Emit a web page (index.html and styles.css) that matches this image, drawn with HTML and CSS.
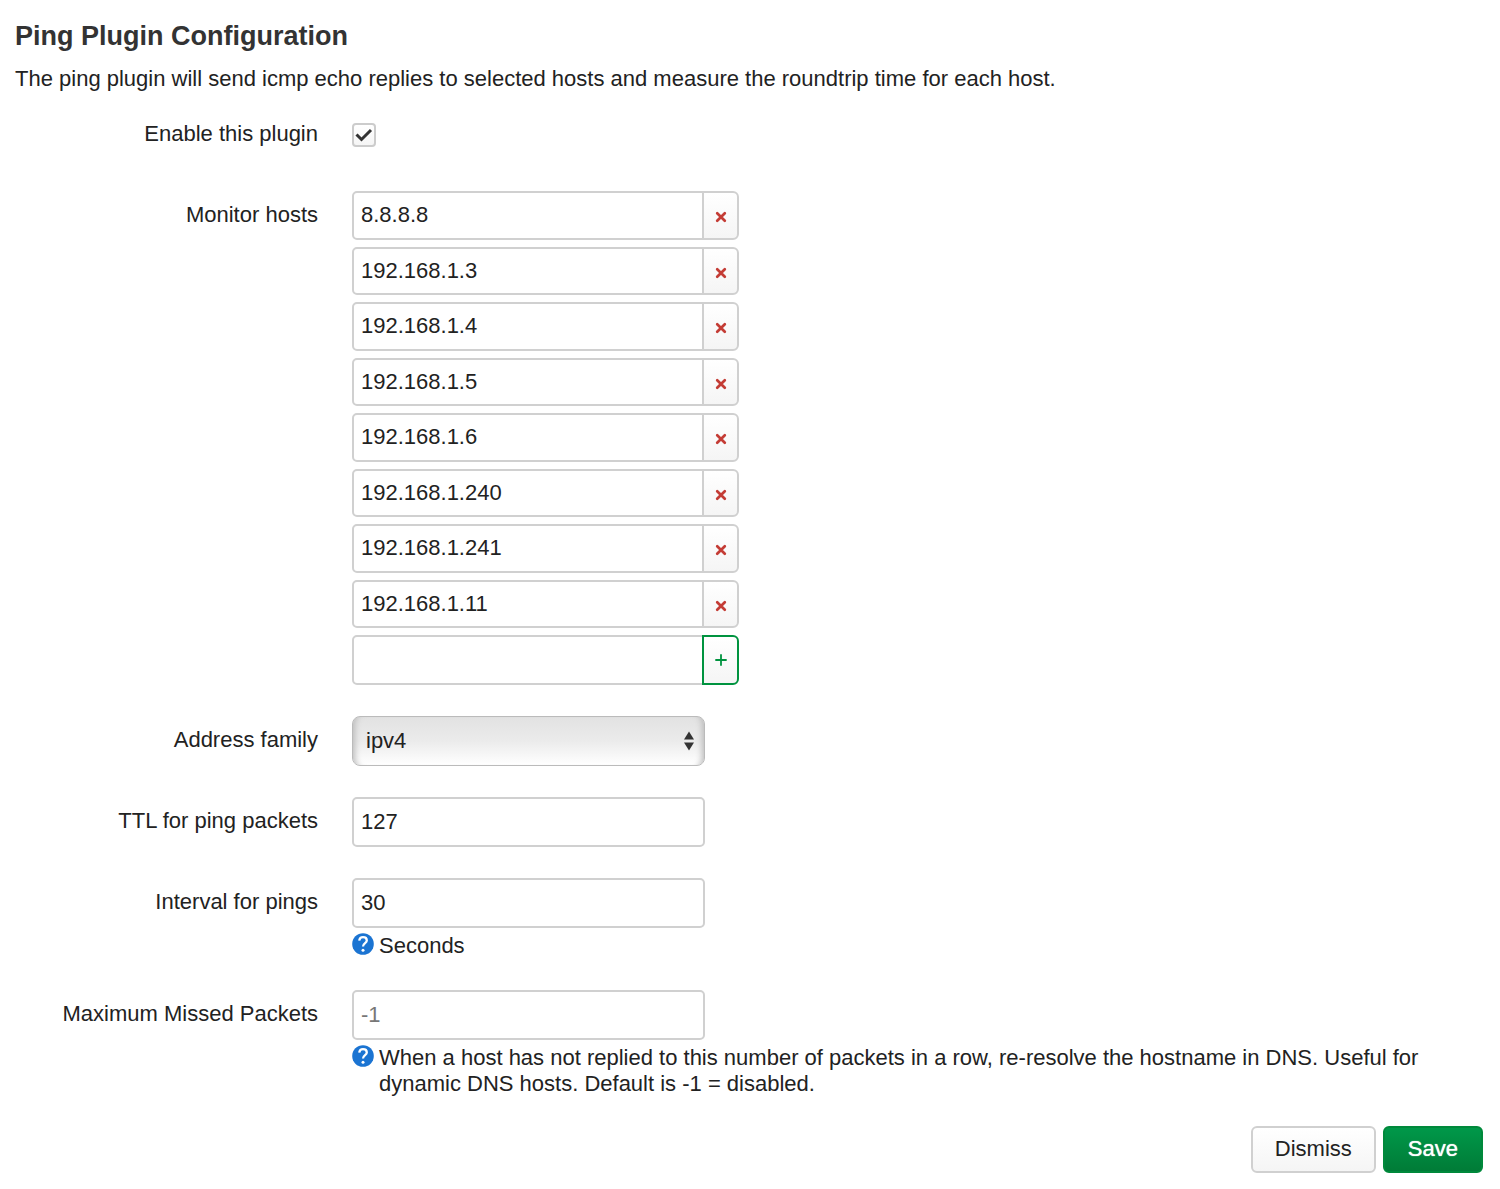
FILE: index.html
```html
<!DOCTYPE html>
<html lang="en">
<head>
<meta charset="utf-8">
<title>Ping Plugin Configuration</title>
<link rel="stylesheet" href="styles.css">
</head>
<body>
<svg class="symbols" aria-hidden="true">
  <symbol id="cross" viewBox="0 0 12 12"><path d="M2.2 2.2L9.8 9.8M9.8 2.2L2.2 9.8" stroke="currentColor" stroke-width="2.7" stroke-linecap="round"/></symbol>
  <symbol id="help" viewBox="0 0 22 22"><circle cx="11" cy="11" r="10.8" fill="#1b74d2"/><path d="M7.2 7.6C7.6 5.2 9.2 4.2 11 4.2C13.2 4.2 14.8 5.5 14.8 7.5C14.8 10 11 10.2 11 13.4" fill="none" stroke="#fff" stroke-width="2.3"/><circle cx="11" cy="17.2" r="1.5" fill="#fff"/></symbol>
</svg>
<form class="config">
  <h1 class="title">Ping Plugin Configuration</h1>
  <p class="intro">The ping plugin will send icmp echo replies to selected hosts and measure the roundtrip time for each host.</p>

  <div class="row row-check">
    <label class="name" for="enable">Enable this plugin</label>
    <div class="field"><input class="check" type="checkbox" id="enable" checked></div>
  </div>

  <div class="row">
    <label class="name" for="host1">Monitor hosts</label>
    <div class="field hosts">
      <div class="host-list">
        <div class="host"><input class="text" id="host1" value="8.8.8.8"><button class="side remove" type="button" aria-label="Remove"><svg class="cross"><use href="#cross"/></svg></button></div>
        <div class="host"><input class="text" aria-label="Host 2" value="192.168.1.3"><button class="side remove" type="button" aria-label="Remove"><svg class="cross"><use href="#cross"/></svg></button></div>
        <div class="host"><input class="text" aria-label="Host 3" value="192.168.1.4"><button class="side remove" type="button" aria-label="Remove"><svg class="cross"><use href="#cross"/></svg></button></div>
        <div class="host"><input class="text" aria-label="Host 4" value="192.168.1.5"><button class="side remove" type="button" aria-label="Remove"><svg class="cross"><use href="#cross"/></svg></button></div>
        <div class="host"><input class="text" aria-label="Host 5" value="192.168.1.6"><button class="side remove" type="button" aria-label="Remove"><svg class="cross"><use href="#cross"/></svg></button></div>
        <div class="host"><input class="text" aria-label="Host 6" value="192.168.1.240"><button class="side remove" type="button" aria-label="Remove"><svg class="cross"><use href="#cross"/></svg></button></div>
        <div class="host"><input class="text" aria-label="Host 7" value="192.168.1.241"><button class="side remove" type="button" aria-label="Remove"><svg class="cross"><use href="#cross"/></svg></button></div>
        <div class="host"><input class="text" aria-label="Host 8" value="192.168.1.11"><button class="side remove" type="button" aria-label="Remove"><svg class="cross"><use href="#cross"/></svg></button></div>
      </div>
      <div class="host"><input class="text" aria-label="New host"><button class="side add" type="button" aria-label="Add"><svg class="plus" viewBox="0 0 12 12"><path d="M6 0.3V11.7M0.3 6H11.7" stroke="currentColor" stroke-width="1.8"/></svg></button></div>
    </div>
  </div>

  <div class="row">
    <label class="name" for="family">Address family</label>
    <div class="field">
      <div class="select-box">
        <select class="select" id="family"><option>ipv4</option><option>ipv6</option></select>
        <svg class="arrows" viewBox="0 0 10 20"><path d="M5 0.5L10 8.5H0ZM5 19.5L10 11.5H0Z" fill="#333"/></svg>
      </div>
    </div>
  </div>

  <div class="row">
    <label class="name" for="ttl">TTL for ping packets</label>
    <div class="field"><input class="text" id="ttl" value="127"></div>
  </div>

  <div class="row">
    <label class="name" for="interval">Interval for pings</label>
    <div class="field">
      <input class="text" id="interval" value="30">
      <div class="hint"><svg class="help"><use href="#help"/></svg><span>Seconds</span></div>
    </div>
  </div>

  <div class="row">
    <label class="name" for="missed">Maximum Missed Packets</label>
    <div class="field">
      <input class="text" id="missed" placeholder="-1">
      <div class="hint"><svg class="help"><use href="#help"/></svg><span>When a host has not replied to this number of packets in a row, re-resolve the hostname in DNS. Useful for dynamic DNS hosts. Default is -1 = disabled.</span></div>
    </div>
  </div>

  <div class="actions">
    <button class="button" type="button">Dismiss</button>
    <button class="button save" type="submit">Save</button>
  </div>
</form>
</body>
</html>
```
FILE: styles.css
```css
* { box-sizing: border-box; }
body {
  margin: 0;
  background: #fff;
  color: #222;
  font: 22px/26px "Liberation Sans", Arial, sans-serif;
}
input, select, button { font: inherit; color: inherit; margin: 0; }
.symbols { display: none; }
.config { padding: 20px 17px 16px 15px; }
.title {
  margin: 0 0 14px;
  color: #333;
  font-size: 27px;
  line-height: 32px;
}
.intro { margin: 0 0 31px; }

.row { display: flex; gap: 34px; margin-bottom: 31px; }
.row-check { margin-bottom: 44px; }
.name { flex: 0 0 303px; padding-top: 11px; text-align: right; }
.row-check .name { padding-top: 0; margin-top: -2px; }
.field { flex: 1; min-width: 0; }

.check {
  appearance: none;
  display: block;
  width: 24px;
  height: 24px;
  border: 2px solid #ccc;
  border-radius: 4px;
  background: linear-gradient(#fff, #f5f5f5);
}
.check:checked {
  background: url("data:image/svg+xml,%3Csvg xmlns='http://www.w3.org/2000/svg' viewBox='0 0 20 20'%3E%3Cpath d='M2.5 9.5L7.5 14.5L17 5' fill='none' stroke='%23333' stroke-width='3'/%3E%3C/svg%3E") center / 20px no-repeat, linear-gradient(#fff, #f5f5f5);
}

.text {
  display: block;
  width: 353px;
  height: 50px;
  padding: 0 7px;
  border: 2px solid #d0d0d0;
  border-radius: 5px;
  background: #fff;
}
.text::placeholder { color: #777; opacity: 1; }

.hosts { display: grid; gap: 7px; }
.host-list { display: grid; grid-auto-rows: 1fr; gap: 7px; min-height: 437px; }
.host { display: flex; }
.host .text { width: 352px; height: auto; min-height: 50px; border-radius: 5px 0 0 5px; }
.host-list .text { min-height: 48px; }
.side {
  display: flex;
  align-items: center;
  justify-content: center;
  width: 37px;
  margin-left: -2px;
  padding: 0;
  border: 2px solid #d0d0d0;
  border-radius: 0 6px 6px 0;
  background: linear-gradient(#fff, #f5f5f5);
}
.host-list .text { min-height: 48px; height: 100%; }
.host-list .host .text { min-height: 48px; }
.remove { padding-top: 4px; color: #c43c35; }
.add { color: #00933f; border-color: #00933f; }
.cross, .plus { width: 12px; height: 12px; }

.select-box { position: relative; width: 353px; }
.select {
  appearance: none;
  display: block;
  width: 100%;
  height: 50px;
  padding: 0 36px 0 13px;
  border: 1px solid #bbb;
  border-radius: 8px;
  background: linear-gradient(#e2e2e2, #ebebeb 50%, #fff);
  box-shadow: inset 8px 0 6px -6px #bbb, inset -8px 0 6px -6px #bbb;
}
.arrows {
  position: absolute;
  top: 15px;
  right: 11px;
  width: 10px;
  height: 20px;
  pointer-events: none;
}

.hint { display: flex; gap: 5px; padding-top: 5px; }
.help { flex: none; width: 22px; height: 22px; }

.actions { display: flex; justify-content: flex-end; gap: 7px; margin-top: -2px; }
.button {
  height: 47px;
  padding: 0 22px 2px;
  border: 2px solid #d0d0d0;
  border-radius: 6px;
  background: linear-gradient(#fff, #f5f5f5);
}
.save {
  padding: 0 23px 2px;
  border-color: #00893b;
  background: linear-gradient(#00994a, #007a36) border-box;
  color: #fff;
  text-shadow: 0 0 1px #fff;
}
```
